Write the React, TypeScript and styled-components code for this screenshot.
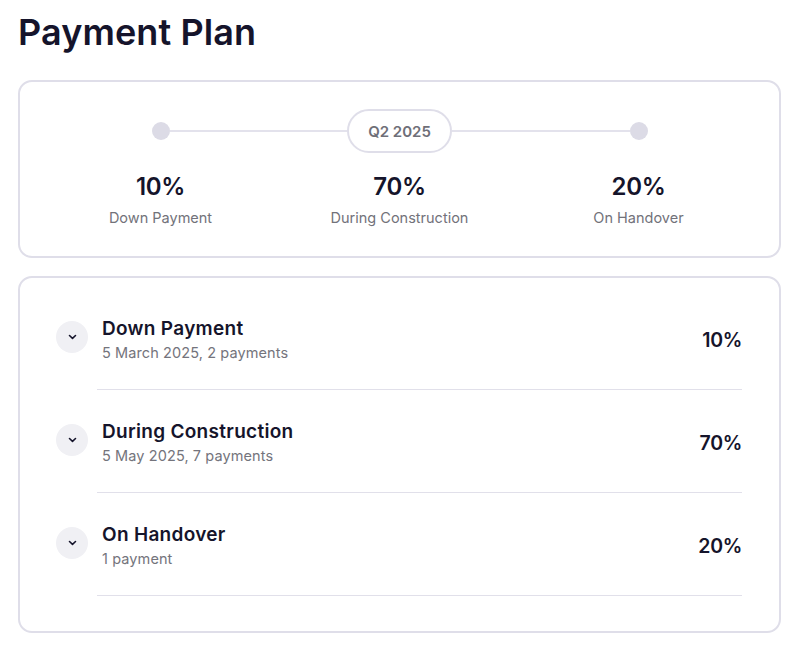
import React from "react";
import styled, { createGlobalStyle } from "styled-components";

const Global = createGlobalStyle`
  html, body { margin: 0; padding: 0; background: #ffffff; }
  body { font-family: Inter, Lato, sans-serif; color: #15142b; }
`;

const Page = styled.div`
  padding: 6px 19px 16px 18px;
  display: flex;
  flex-direction: column;
`;

const Title = styled.h1`
  margin: 0 0 22px;
  font-size: 36px;
  line-height: 52px;
  font-weight: 600;
  color: #15142b;
  letter-spacing: 0.1px;
`;

const Card = styled.section`
  border: 2px solid #dfdee9;
  border-radius: 14px;
  background: #fff;
`;

const SummaryCard = styled(Card)`
  padding: 27px 21px 28px;
  display: grid;
  grid-template-columns: repeat(3, 1fr);
  margin-bottom: 18px;
`;

const Stage = styled.div`
  display: flex;
  flex-direction: column;
  align-items: center;
`;

const Track = styled.div`
  height: 44px;
  width: 100%;
  display: flex;
  align-items: center;
`;

const Segment = styled.div<{ $hidden?: boolean }>`
  flex: 1;
  height: 2px;
  background: ${(p) => (p.$hidden ? "transparent" : "#e3e2ec")};
`;

const Dot = styled.div`
  width: 18px;
  height: 18px;
  border-radius: 50%;
  background: #dcdbe6;
`;

const Pill = styled.div`
  height: 40px;
  padding: 0 19px;
  border: 2px solid #dfdee9;
  border-radius: 22px;
  display: flex;
  align-items: center;
  font-size: 15px;
  font-weight: 600;
  color: #6f6f78;
`;

const Percent = styled.div<{ $size?: number }>`
  font-size: ${(p) => p.$size ?? 24}px;
  line-height: 30px;
  font-weight: 600;
  color: #15142b;
  letter-spacing: -0.3px;
`;

const StagePercent = styled(Percent)`
  margin-top: 19px;
`;

const Label = styled.div`
  font-size: 14.5px;
  line-height: 20px;
  color: #72727a;
  margin-top: 6px;
`;

const ListCard = styled(Card)`
  padding: 9px 37px 35px 36px;
  display: flex;
  flex-direction: column;
`;

const Item = styled.div`
  display: flex;
  align-items: flex-start;
`;

const Chevron = styled.div`
  width: 32px;
  height: 32px;
  flex: none;
  border-radius: 50%;
  background: #f0f0f4;
  display: flex;
  align-items: center;
  justify-content: center;
  margin-top: 34px;
  color: #15142b;
`;

const Body = styled.div`
  flex: 1;
  margin-left: 9px;
  padding: 30px 0 26px 5px;
  border-bottom: 1.5px solid #e1e0ea;
  display: flex;
  align-items: center;
  justify-content: space-between;
`;

const Texts = styled.div`
  display: flex;
  flex-direction: column;
  gap: 2px;
`;

const ItemTitle = styled.div`
  font-size: 19px;
  line-height: 24px;
  font-weight: 600;
  color: #15142b;
  letter-spacing: 0.3px;
`;

const ItemSub = styled.div`
  font-size: 14.5px;
  line-height: 20px;
  color: #74747c;
  letter-spacing: 0.1px;
`;

const stages = [
  { pct: "10%", label: "Down Payment", marker: "dot" },
  { pct: "70%", label: "During Construction", marker: "pill" },
  { pct: "20%", label: "On Handover", marker: "dot" },
];

const items = [
  { title: "Down Payment", sub: "5 March 2025, 2 payments", pct: "10%" },
  { title: "During Construction", sub: "5 May 2025, 7 payments", pct: "70%" },
  { title: "On Handover", sub: "1 payment", pct: "20%" },
];

const ChevronIcon = () => (
  <svg width="9" height="6" viewBox="0 0 9 6" fill="none">
    <path d="M1.5 1.5 L4.5 4.3 L7.5 1.5" stroke="currentColor" strokeWidth="1.6" strokeLinecap="round" strokeLinejoin="round" />
  </svg>
);

export default function App() {
  return (
    <>
      <Global />
      <Page>
        <Title>Payment Plan</Title>
        <SummaryCard>
          {stages.map((s, i) => (
            <Stage key={s.label}>
              <Track>
                <Segment $hidden={i === 0} />
                {s.marker === "dot" ? <Dot /> : <Pill>Q2 2025</Pill>}
                <Segment $hidden={i === stages.length - 1} />
              </Track>
              <StagePercent>{s.pct}</StagePercent>
              <Label>{s.label}</Label>
            </Stage>
          ))}
        </SummaryCard>
        <ListCard>
          {items.map((it) => (
            <Item key={it.title}>
              <Chevron>
                <ChevronIcon />
              </Chevron>
              <Body>
                <Texts>
                  <ItemTitle>{it.title}</ItemTitle>
                  <ItemSub>{it.sub}</ItemSub>
                </Texts>
                <Percent $size={19.5}>{it.pct}</Percent>
              </Body>
            </Item>
          ))}
        </ListCard>
      </Page>
    </>
  );
}
